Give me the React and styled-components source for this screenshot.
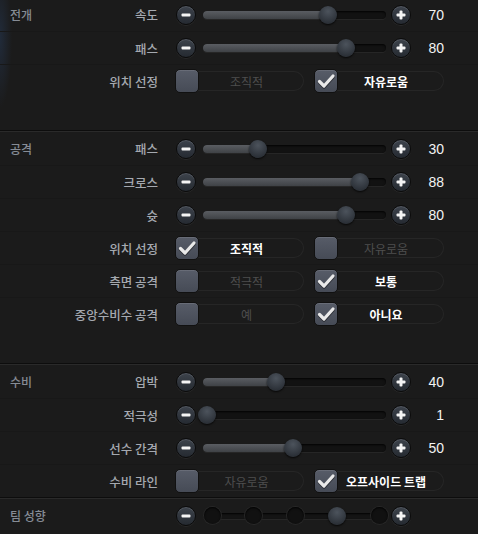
import React from 'react';
import styled, {createGlobalStyle} from 'styled-components';

const GlobalStyle = createGlobalStyle`
  html, body {
    margin: 0;
    padding: 0;
    background: #1b1b1b;
  }
  body {
    font-family: "Noto Sans CJK KR", "Noto Sans", sans-serif;
    overflow: hidden;
  }
`

const Page = styled.div`
  width: 478px;
  height: 534px;
  overflow: hidden;
  background: #1b1b1b;
`

const Section = styled.div`
  padding-top: ${props => props.first ? 0 : 1}px;
  padding-bottom: ${props => props.spacer ? 33 : 0}px;
  margin-top: ${props => props.first ? -2 : 0}px;
  border-top: ${props => props.first ? 'none' : '1px solid #0d0d0d'};
  box-shadow: ${props => props.first ? 'none' : 'inset 0 1px 0 #2a2a2a'};
  background: ${props => props.first
    ? 'radial-gradient(ellipse 12px 70px at 0 40px, rgba(40,62,95,0.45), rgba(40,62,95,0))'
    : 'transparent'};
`

const Row = styled.div`
  display: grid;
  grid-template-columns: 60px 88px auto;
  align-items: center;
  height: 33px;
  box-sizing: border-box;
  padding-left: 10px;
  border-top: ${props => props.first ? 'none' : '1px solid #181818'};
`

const SectionLabel = styled.div`
  font-size: 12px;
  font-weight: 500;
  color: #868c95;
  white-space: nowrap;
`

const SubLabel = styled.div`
  font-size: 12.5px;
  font-weight: 500;
  color: #a5a9b0;
  text-align: right;
  white-space: nowrap;
`

const Controls = styled.div`
  display: flex;
  align-items: center;
  margin-left: 18px;
`

const RoundButton = styled.div`
  width: 20px;
  height: 20px;
  box-sizing: border-box;
  border-radius: 50%;
  background: linear-gradient(#3d434c, #252a31);
  border: 1px solid #0b0b0b;
  box-shadow: 0 1px 0 rgba(255,255,255,0.06), inset 0 1px 0 rgba(255,255,255,0.12);
  display: flex;
  align-items: center;
  justify-content: center;
  flex-shrink: 0;
`

const Track = styled.div`
  position: relative;
  width: 183px;
  height: 8px;
  margin: 0 5px 0 7px;
  border-radius: 4px;
  background: #121212;
  box-shadow: inset 0 1px 2px rgba(0,0,0,0.9), 0 1px 0 rgba(255,255,255,0.05);
`

const Fill = styled.div`
  height: 100%;
  border-radius: 4px;
  background: linear-gradient(#5a5d62, #3f4246);
`

const Knob = styled.div`
  position: absolute;
  top: 50%;
  width: 18px;
  height: 18px;
  margin: -9px 0 0 -9px;
  border-radius: 50%;
  background: radial-gradient(circle at 50% 30%, #4c535c, #2b3037 75%);
  box-shadow: 0 1px 2px rgba(0,0,0,0.8);
`

const Notch = styled.div`
  position: absolute;
  top: 50%;
  width: 17px;
  height: 17px;
  margin: -8.5px 0 0 -8.5px;
  border-radius: 50%;
  background: #111;
  box-shadow: inset 0 1px 2px rgba(0,0,0,0.9), 0 0 0 1px #272727;
`

const StepTrack = styled(Track)`
  height: 6px;
  background: #141414;
`

const Value = styled.div`
  width: 33px;
  text-align: right;
  font-family: "Liberation Sans", Arial, sans-serif;
  font-size: 14px;
  color: #f2f2f2;
`

const Options = styled.div`
  display: flex;
  gap: 10px;
  margin-left: -1px;
`

const Option = styled.div`
  display: flex;
  align-items: center;
  width: ${props => props.w}px;
`

const Checkbox = styled.div`
  width: 24px;
  height: 24px;
  box-sizing: border-box;
  border-radius: 5px;
  background: linear-gradient(#575c68, #464b56);
  border: 1px solid #111;
  box-shadow: inset 0 1px 0 rgba(255,255,255,0.1);
  display: flex;
  align-items: center;
  justify-content: center;
  flex-shrink: 0;
  position: relative;
  z-index: 1;
`

const Pill = styled.div`
  flex: 1;
  height: 20px;
  box-sizing: border-box;
  margin-left: -4px;
  padding: 0 9px 0 4px;
  border: 1px solid #262626;
  border-left: none;
  border-radius: 0 10px 10px 0;
  display: flex;
  align-items: center;
  justify-content: center;
  font-size: 12px;
  font-weight: ${props => props.active ? 700 : 400};
  color: ${props => props.active ? '#ffffff' : '#4e4e4e'};
  white-space: nowrap;
`

const Minus = () => (
  <svg width="10" height="10" viewBox="0 0 10 10">
    <rect x="0.5" y="3.5" width="9" height="3" rx="1" fill="#f4f4f4"/>
  </svg>
)

const Plus = () => (
  <svg width="10" height="10" viewBox="0 0 10 10">
    <rect x="0.5" y="3.5" width="9" height="3" rx="1" fill="#f4f4f4"/>
    <rect x="3.5" y="0.5" width="3" height="9" rx="1" fill="#f4f4f4"/>
  </svg>
)

const Check = () => (
  <svg width="20" height="20" viewBox="0 0 20 20">
    <path d="M3.5 10.5 L8 15 L17 5" fill="none" stroke="rgba(0,0,0,0.45)" strokeWidth="3.4"
      strokeLinecap="round" strokeLinejoin="round" transform="translate(0 1)"/>
    <path d="M3.5 10.5 L8 15 L17 5" fill="none" stroke="#e9e9e9" strokeWidth="3.2"
      strokeLinecap="round" strokeLinejoin="round"/>
  </svg>
)

const knobLeft = v => 4 + (v - 1) / 99 * 174

const Slider = ({value}) => (
  <Controls>
    <RoundButton><Minus/></RoundButton>
    <Track>
      <Fill style={{width: knobLeft(value)}}/>
      <Knob style={{left: knobLeft(value)}}/>
    </Track>
    <RoundButton><Plus/></RoundButton>
    <Value>{value}</Value>
  </Controls>
)

const Steps = ({count, value}) => (
  <Controls>
    <RoundButton><Minus/></RoundButton>
    <StepTrack>
      {Array.from({length: count}).map((_, i) =>
        i === value
          ? <Knob key={i} style={{left: 9 + i * 41.75}}/>
          : <Notch key={i} style={{left: 9 + i * 41.75}}/>
      )}
    </StepTrack>
    <RoundButton><Plus/></RoundButton>
  </Controls>
)

const Toggle = ({options, selected}) => (
  <Controls>
    <Options>
      {options.map((o, i) => (
        <Option key={o} w={i === 0 ? 129 : 130}>
          <Checkbox>{i === selected && <Check/>}</Checkbox>
          <Pill active={i === selected}>{o}</Pill>
        </Option>
      ))}
    </Options>
  </Controls>
)

const sections = [
  {title: '전개', spacer: true, rows: [
    {label: '속도', value: 70},
    {label: '패스', value: 80},
    {label: '위치 선정', options: ['조직적', '자유로움'], selected: 1},
  ]},
  {title: '공격', spacer: true, rows: [
    {label: '패스', value: 30},
    {label: '크로스', value: 88},
    {label: '슛', value: 80},
    {label: '위치 선정', options: ['조직적', '자유로움'], selected: 0},
    {label: '측면 공격', options: ['적극적', '보통'], selected: 1},
    {label: '중앙수비수 공격', options: ['예', '아니요'], selected: 1},
  ]},
  {title: '수비', rows: [
    {label: '압박', value: 40},
    {label: '적극성', value: 1},
    {label: '선수 간격', value: 50},
    {label: '수비 라인', options: ['자유로움', '오프사이드 트랩'], selected: 1},
  ]},
  {title: '팀 성향', rows: [
    {label: '', steps: 5, value: 3},
  ]},
]

const App = () => (
  <Page>
    <GlobalStyle/>
    {sections.map((s, si) => (
      <Section key={s.title} first={si === 0} spacer={s.spacer}>
        {s.rows.map((r, ri) => (
          <Row key={ri} first={ri === 0}>
            <SectionLabel>{ri === 0 ? s.title : ''}</SectionLabel>
            <SubLabel>{r.label}</SubLabel>
            {r.options
              ? <Toggle options={r.options} selected={r.selected}/>
              : r.steps
                ? <Steps count={r.steps} value={r.value}/>
                : <Slider value={r.value}/>}
          </Row>
        ))}
      </Section>
    ))}
  </Page>
)

export default App;
